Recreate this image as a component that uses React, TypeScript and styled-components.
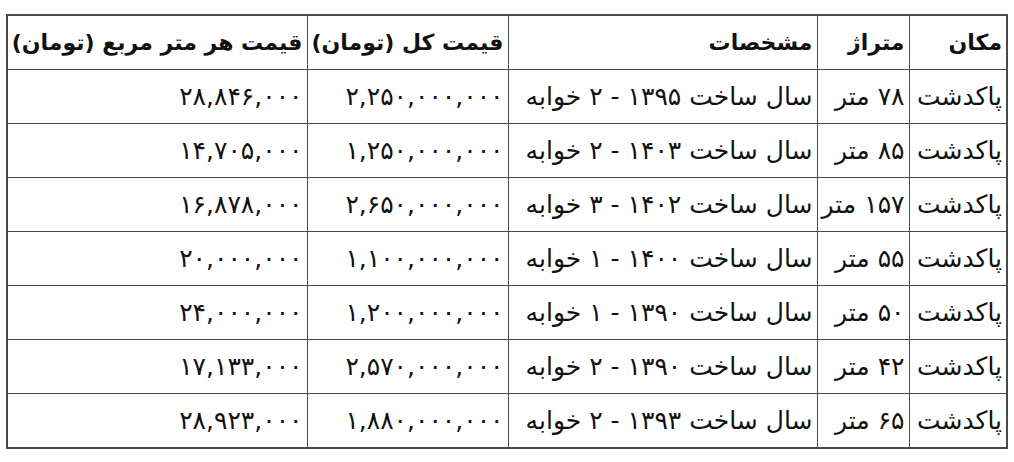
import styled, { createGlobalStyle } from 'styled-components';

const GlobalStyle = createGlobalStyle`
  body {
    margin: 0;
    background: #ffffff;
    font-family: "DejaVu Sans", "Noto Sans", sans-serif;
  }
`;

const Page = styled.div`
  padding: 14px 0 0 6px;
`;

const PriceTable = styled.table`
  direction: rtl;
  width: 1000px;
  table-layout: fixed;
  border-collapse: collapse;
  border: 2px solid #4a4a4a;
  color: #111;
`;

const Col = styled.col<{ $w: number }>`
  width: ${({ $w }) => $w}px;
`;

const HeadCell = styled.th`
  height: 53px;
  padding: 0 4px;
  border: 1px solid #4a4a4a;
  text-align: right;
  font-size: 22px;
  font-weight: bold;
  white-space: nowrap;
`;

const Cell = styled.td`
  height: 53px;
  padding: 0 4px;
  border: 1px solid #4a4a4a;
  text-align: right;
  font-size: 25px;
  white-space: nowrap;
`;

type Listing = {
  place: string;
  area: string;
  details: string;
  total: string;
  perMeter: string;
};

const listings: Listing[] = [
  { place: 'پاکدشت', area: '۷۸ متر', details: 'سال ساخت ۱۳۹۵ - ۲ خوابه', total: '۲,۲۵۰,۰۰۰,۰۰۰', perMeter: '۲۸,۸۴۶,۰۰۰' },
  { place: 'پاکدشت', area: '۸۵ متر', details: 'سال ساخت ۱۴۰۳ - ۲ خوابه', total: '۱,۲۵۰,۰۰۰,۰۰۰', perMeter: '۱۴,۷۰۵,۰۰۰' },
  { place: 'پاکدشت', area: '۱۵۷ متر', details: 'سال ساخت ۱۴۰۲ - ۳ خوابه', total: '۲,۶۵۰,۰۰۰,۰۰۰', perMeter: '۱۶,۸۷۸,۰۰۰' },
  { place: 'پاکدشت', area: '۵۵ متر', details: 'سال ساخت ۱۴۰۰ - ۱ خوابه', total: '۱,۱۰۰,۰۰۰,۰۰۰', perMeter: '۲۰,۰۰۰,۰۰۰' },
  { place: 'پاکدشت', area: '۵۰ متر', details: 'سال ساخت ۱۳۹۰ - ۱ خوابه', total: '۱,۲۰۰,۰۰۰,۰۰۰', perMeter: '۲۴,۰۰۰,۰۰۰' },
  { place: 'پاکدشت', area: '۴۲ متر', details: 'سال ساخت ۱۳۹۰ - ۲ خوابه', total: '۲,۵۷۰,۰۰۰,۰۰۰', perMeter: '۱۷,۱۳۳,۰۰۰' },
  { place: 'پاکدشت', area: '۶۵ متر', details: 'سال ساخت ۱۳۹۳ - ۲ خوابه', total: '۱,۸۸۰,۰۰۰,۰۰۰', perMeter: '۲۸,۹۲۳,۰۰۰' },
];

const App = () => {
  return (
    <Page>
      <GlobalStyle />
      <PriceTable>
        <colgroup>
          <Col $w={98} />
          <Col $w={92} />
          <Col $w={309} />
          <Col $w={201} />
          <Col $w={300} />
        </colgroup>
        <thead>
          <tr>
            <HeadCell>مکان</HeadCell>
            <HeadCell>متراژ</HeadCell>
            <HeadCell>مشخصات</HeadCell>
            <HeadCell>قیمت کل (تومان)</HeadCell>
            <HeadCell>قیمت هر متر مربع (تومان)</HeadCell>
          </tr>
        </thead>
        <tbody>
          {listings.map((l, i) => (
            <tr key={i}>
              <Cell>{l.place}</Cell>
              <Cell>{l.area}</Cell>
              <Cell>{l.details}</Cell>
              <Cell>{l.total}</Cell>
              <Cell>{l.perMeter}</Cell>
            </tr>
          ))}
        </tbody>
      </PriceTable>
    </Page>
  );
};

export default App;
